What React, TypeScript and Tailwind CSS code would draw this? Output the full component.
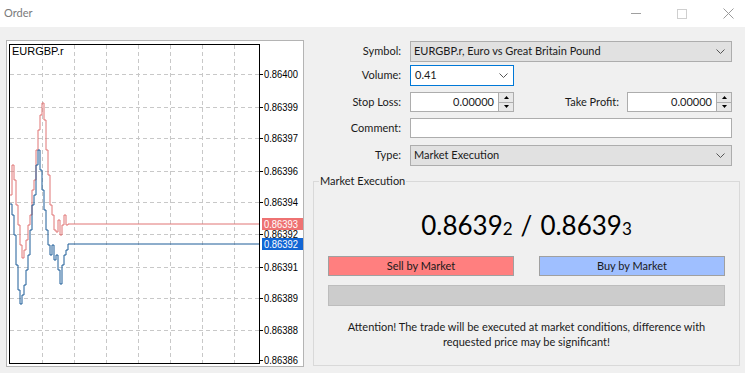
import React from 'react';

const UI = "font-['Segoe_UI','Lato',sans-serif]";

const askYs = [195, 165, 180, 205, 225, 245, 258, 250, 240, 225, 215, 190, 180, 150, 130, 115, 103, 120, 150, 175, 205, 215, 230, 232, 220, 235, 225, 215, 225, 224];
const bidYs = [204, 215, 235, 265, 290, 304, 295, 285, 270, 255, 230, 205, 195, 165, 150, 170, 190, 210, 230, 245, 255, 245, 260, 255, 270, 284, 265, 255, 250, 244];

const priceTicks = [
  { y: 74, v: '0.86400' },
  { y: 107, v: '0.86399' },
  { y: 138, v: '0.86397' },
  { y: 171, v: '0.86396' },
  { y: 202, v: '0.86394' },
  { y: 234, v: '0.86392' },
  { y: 267, v: '0.86391' },
  { y: 298, v: '0.86389' },
  { y: 330, v: '0.86388' },
  { y: 360, v: '0.86386' },
];
const gridX = [42, 74, 106, 138, 170, 202, 234];

function stepPath(ys: number[], x0: number, dx: number, endX: number) {
  let d = `M${x0} ${ys[0]}`;
  ys.forEach((y, i) => {
    d += ` V${y} H${x0 + (i + 1) * dx}`;
  });
  return d + ` H${endX}`;
}

function PriceText({ y, v, fill = '#000' }: { y: number; v: string; fill?: string }) {
  return (
    <text
      x="264"
      y={y}
      fontSize="10"
      fontFamily="Liberation Sans, sans-serif"
      fill={fill}
      textLength="34"
      lengthAdjust="spacingAndGlyphs"
    >
      {v}
    </text>
  );
}

function Chart() {
  return (
    <div className="ml-[6px] h-[327px] w-[298px] border border-[#b4b4b4] bg-white">
      <svg width="296" height="325" viewBox="7 41 296 325" className="block">
        {priceTicks.slice(0, 9).map((t) => (
          <line key={t.y} x1="10" x2="259" y1={t.y + 0.5} y2={t.y + 0.5} stroke="#c8c8c8" strokeDasharray="4 3" />
        ))}
        {gridX.map((x) => (
          <line key={x} x1={x + 0.5} x2={x + 0.5} y1="45" y2="363" stroke="#c8c8c8" strokeDasharray="4 3" />
        ))}
        <path d={stepPath(askYs, 10, 2, 259)} fill="none" stroke="#e07474" strokeWidth="1" />
        <path d={stepPath(bidYs, 10, 2, 259)} fill="none" stroke="#1d5d98" strokeWidth="1" />
        <rect x="9.5" y="44.5" width="250" height="319" fill="none" stroke="#000" />
        {priceTicks.map((t) => (
          <line key={t.y} x1="259" x2="263" y1={t.y + 0.5} y2={t.y + 0.5} stroke="#000" />
        ))}
        <text x="12" y="55" fontSize="11" fontFamily="Liberation Sans, sans-serif" fill="#000">EURGBP.r</text>
        {priceTicks.map((t) => (
          <PriceText key={t.v + t.y} y={t.y + 4} v={t.v} />
        ))}
        <rect x="262" y="218" width="42" height="12" fill="#ee7272" />
        <PriceText y={228} v="0.86393" fill="#fff" />
        <rect x="262" y="238" width="42" height="12" fill="#1266d4" />
        <PriceText y={248} v="0.86392" fill="#fff" />
      </svg>
    </div>
  );
}

function Chevron() {
  return (
    <svg width="9" height="5" viewBox="0 0 9 5" className="shrink-0">
      <polyline points="0.5,0.5 4.5,4.5 8.5,0.5" fill="none" stroke="#555" strokeWidth="1" />
    </svg>
  );
}

function Spinner() {
  return (
    <div className="flex h-full w-[15px] shrink-0 flex-col border-l border-[#adadad] bg-[#e8e8e8]">
      <div className="flex flex-1 items-center justify-center border-b border-[#adadad]">
        <svg width="5" height="3" viewBox="0 0 5 3"><polygon points="0,3 5,3 2.5,0" fill="#000" /></svg>
      </div>
      <div className="flex flex-1 items-center justify-center">
        <svg width="5" height="3" viewBox="0 0 5 3"><polygon points="0,0 5,0 2.5,3" fill="#000" /></svg>
      </div>
    </div>
  );
}

function Label({ children }: { children: React.ReactNode }) {
  return <span className="w-[88px] shrink-0 text-right">{children}</span>;
}

export default function App() {
  return (
    <div className={`flex h-[373px] w-[745px] flex-col overflow-hidden bg-[#f0f0f0] text-[11px] text-[#1a1a1a] ${UI}`}>
      <div className="flex h-[27px] shrink-0 items-center justify-between bg-white">
        <span className="pl-[4px] text-[11px] text-[#7a7a7a]">Order</span>
        <div className="mr-[-6px] flex h-full items-center">
          <div className="flex w-[46px] justify-center">
            <div className="h-px w-[10px] bg-[#a0a0a0]" />
          </div>
          <div className="flex w-[46px] justify-center">
            <div className="h-[10px] w-[10px] border border-[#cfcfcf]" />
          </div>
          <div className="flex w-[46px] justify-center">
            <svg width="11" height="11" viewBox="0 0 11 11">
              <path d="M0.5 0.5 L10.5 10.5 M10.5 0.5 L0.5 10.5" stroke="#9a9a9a" strokeWidth="1" />
            </svg>
          </div>
        </div>
      </div>

      <div className="flex pt-[13px]">
        <Chart />

        <div className="ml-[9px] flex w-[427px] flex-col">
          <div className="mt-[1px] flex h-[21px] items-center gap-[9px]">
            <Label>Symbol:</Label>
            <div className="flex h-full w-[322px] items-center justify-between border border-[#adadad] bg-[#e1e1e1] pl-[3px] pr-[6px]">
              <span>EURGBP.r, Euro vs Great Britain Pound</span>
              <Chevron />
            </div>
          </div>

          <div className="mt-[3px] flex h-[21px] items-center gap-[9px]">
            <Label>Volume:</Label>
            <div className="flex h-full w-[104px] items-center justify-between border border-[#0078d7] bg-white pl-[4px] pr-[5px]">
              <span>0.41</span>
              <Chevron />
            </div>
          </div>

          <div className="mr-[8px] mt-[6px] flex h-[20px] items-center gap-[9px]">
            <Label>Stop Loss:</Label>
            <div className="flex h-full w-[104px] border border-[#adadad] bg-white">
              <span className="flex flex-1 items-center justify-end pr-[4px]">0.00000</span>
              <Spinner />
            </div>
            <span className="ml-auto mr-[-1px]">Take Profit:</span>
            <div className="flex h-full w-[105px] border border-[#adadad] bg-white">
              <span className="flex flex-1 items-center justify-end pr-[4px]">0.00000</span>
              <Spinner />
            </div>
          </div>

          <div className="mt-[6px] flex h-[20px] items-center gap-[9px]">
            <Label>Comment:</Label>
            <div className="h-full w-[322px] border border-[#adadad] bg-white" />
          </div>

          <div className="mt-[7px] flex h-[21px] items-center gap-[9px]">
            <Label>Type:</Label>
            <div className="flex h-full w-[322px] items-center justify-between border border-[#adadad] bg-[#e1e1e1] pl-[3px] pr-[6px]">
              <span>Market Execution</span>
              <Chevron />
            </div>
          </div>

          <fieldset className="mt-[8px] h-[192px] w-[427px] border border-[#d9d9d9] px-[14px]">
            <legend className="ml-[-9px] px-[1px] text-[11px] leading-[14px]">Market Execution</legend>
            <div className="mt-[22px] flex items-baseline justify-center text-[26px] leading-[30px] text-black">
              <span>0.8639</span>
              <span className="text-[17px]">2</span>
              <span className="mx-[8px]">/</span>
              <span>0.8639</span>
              <span className="text-[17px]">3</span>
            </div>
            <div className="mt-[12px] flex justify-between">
              <div className="flex h-[20px] w-[186px] items-center justify-center border border-[#a0a0a0] bg-[#ff7f7f] text-[#1a1a1a]">
                Sell by Market
              </div>
              <div className="flex h-[20px] w-[186px] items-center justify-center border border-[#a0a0a0] bg-[#9fbfff] text-[#1a1a1a]">
                Buy by Market
              </div>
            </div>
            <div className="mt-[9px] h-[21px] border border-[#bdbdbd] bg-[#cccccc]" />
            <p className="mt-[13px] text-center leading-[15px]">
              Attention! The trade will be executed at market conditions, difference with
              <br />
              requested price may be significant!
            </p>
          </fieldset>
        </div>
      </div>
    </div>
  );
}
